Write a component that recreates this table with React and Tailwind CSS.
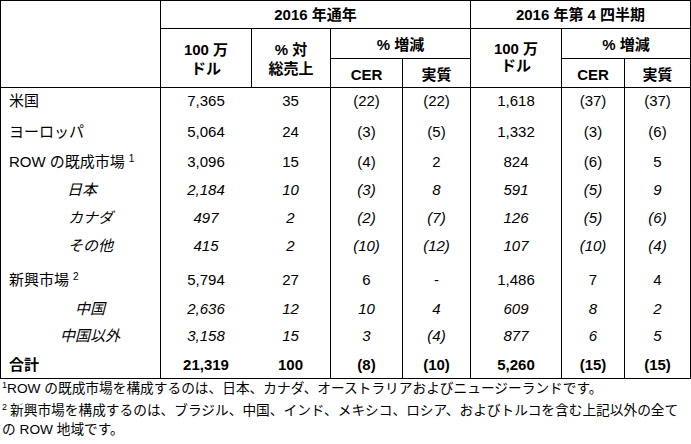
import React from "react";

const rows = [
  { label: "米国", v: ["7,365", "35", "(22)", "(22)", "1,618", "(37)", "(37)"], kind: "n", lc: "pl-[8px]" },
  { label: "ヨーロッパ", v: ["5,064", "24", "(3)", "(5)", "1,332", "(3)", "(6)"], kind: "n", lc: "pl-[8px]" },
  { label: "ROW の既成市場", sup: "1", v: ["3,096", "15", "(4)", "2", "824", "(6)", "5"], kind: "n", lc: "pl-[8px]" },
  { label: "日本", v: ["2,184", "10", "(3)", "8", "591", "(5)", "9"], kind: "i", lc: "pl-[66px]" },
  { label: "カナダ", v: ["497", "2", "(2)", "(7)", "126", "(5)", "(6)"], kind: "i", lc: "pl-[67px]" },
  { label: "その他", v: ["415", "2", "(10)", "(12)", "107", "(10)", "(4)"], kind: "i", lc: "pl-[67px]" },
  { label: "新興市場", sup: "2", v: ["5,794", "27", "6", "-", "1,486", "7", "4"], kind: "n", lc: "pl-[8px]" },
  { label: "中国", v: ["2,636", "12", "10", "4", "609", "8", "2"], kind: "i", lc: "pl-[74px]" },
  { label: "中国以外", v: ["3,158", "15", "3", "(4)", "877", "6", "5"], kind: "i", lc: "pl-[59px]" },
  { label: "合計", v: ["21,319", "100", "(8)", "(10)", "5,260", "(15)", "(15)"], kind: "b", lc: "pl-[8px]" },
];

const colLines = [
  "border-l border-black",
  "border-l border-black",
  "",
  "border-l border-black",
  "border-l border-black",
  "border-l border-black",
  "border-l border-black",
  "border-l border-r border-black",
];

export default function App() {
  return (
    <div className="w-[691px] h-[444px] bg-white text-black font-['Liberation_Sans','Noto_Sans_CJK_JP',sans-serif] overflow-hidden">
      <div className="grid grid-cols-[160px_91px_79px_72px_68px_91px_63px_67px] grid-rows-[28px_30px_29px_28px_34px_27px_29px_27px_29px_39px_19px_34px_26px] text-[15px]">
        {/* header */}
        <div className="col-start-1 row-start-1 row-span-3 border-l border-t border-black" />
        <div className="col-start-2 col-span-4 row-start-1 border-l border-t border-black font-bold flex items-center justify-center pt-[2px]">
          2016 年通年
        </div>
        <div className="col-start-6 col-span-3 row-start-1 border-l border-t border-r border-black font-bold flex items-center justify-center pt-[2px]">
          2016 年第 4 四半期
        </div>
        <div className="col-start-2 row-start-2 row-span-2 border-l border-t border-black font-bold flex flex-col items-center justify-center leading-[19px] pt-[2px]">
          <span>100 万</span>
          <span>ドル</span>
        </div>
        <div className="col-start-3 row-start-2 row-span-2 border-l border-t border-black font-bold flex flex-col items-center justify-center leading-[19px] pt-[2px]">
          <span>% 対</span>
          <span>総売上</span>
        </div>
        <div className="col-start-4 col-span-2 row-start-2 border-l border-t border-black font-bold flex items-center justify-center pt-[4px]">
          % 増減
        </div>
        <div className="col-start-4 row-start-3 border-l border-t border-black font-bold flex items-center justify-center pt-[5px]">
          CER
        </div>
        <div className="col-start-5 row-start-3 border-l border-t border-black font-bold flex items-center justify-center pt-[5px]">
          実質
        </div>
        <div className="col-start-6 row-start-2 row-span-2 border-l border-t border-black font-bold flex flex-col items-center justify-center leading-[17px] pb-[2px]">
          <span>100 万</span>
          <span>ドル</span>
        </div>
        <div className="col-start-7 col-span-2 row-start-2 border-l border-t border-r border-black font-bold flex items-center justify-center pt-[4px]">
          % 増減
        </div>
        <div className="col-start-7 row-start-3 border-l border-t border-black font-bold flex items-center justify-center pt-[5px]">
          CER
        </div>
        <div className="col-start-8 row-start-3 border-l border-t border-r border-black font-bold flex items-center justify-center pt-[5px]">
          実質
        </div>

        {/* data */}
        {rows.map((r, ri) => {
          const first = ri === 0;
          const last = ri === rows.length - 1;
          const rowCls = `${first ? "border-t" : ""} ${last ? "border-b" : ""} ${
            r.kind === "i" ? "italic" : r.kind === "b" ? "font-bold" : ""
          }`;
          return (
            <React.Fragment key={ri}>
              <div className={`${colLines[0]} ${rowCls} ${r.lc} flex items-center`}>
                <span>{r.label}</span>
                {r.sup && <span className="text-[10px] ml-[4px] -mt-[8px]">{r.sup}</span>}
              </div>
              {r.v.map((val, ci) => (
                <div key={ci} className={`${colLines[ci + 1]} ${rowCls} flex items-center justify-center`}>
                  {val}
                </div>
              ))}
            </React.Fragment>
          );
        })}
      </div>

      <div className="text-[13.7px] leading-[19px] pl-[2px] -mt-[3px] whitespace-nowrap">
        <div>
          <span className="text-[9px] align-[5px]">1</span>ROW の既成市場を構成するのは、日本、カナダ、オーストラリアおよびニュージーランドです。
        </div>
        <div>
          <span className="text-[9px] align-[5px] mr-[3px]">2</span>新興市場を構成するのは、ブラジル、中国、インド、メキシコ、ロシア、およびトルコを含む上記以外の全て
        </div>
        <div>の ROW 地域です。</div>
      </div>
    </div>
  );
}
